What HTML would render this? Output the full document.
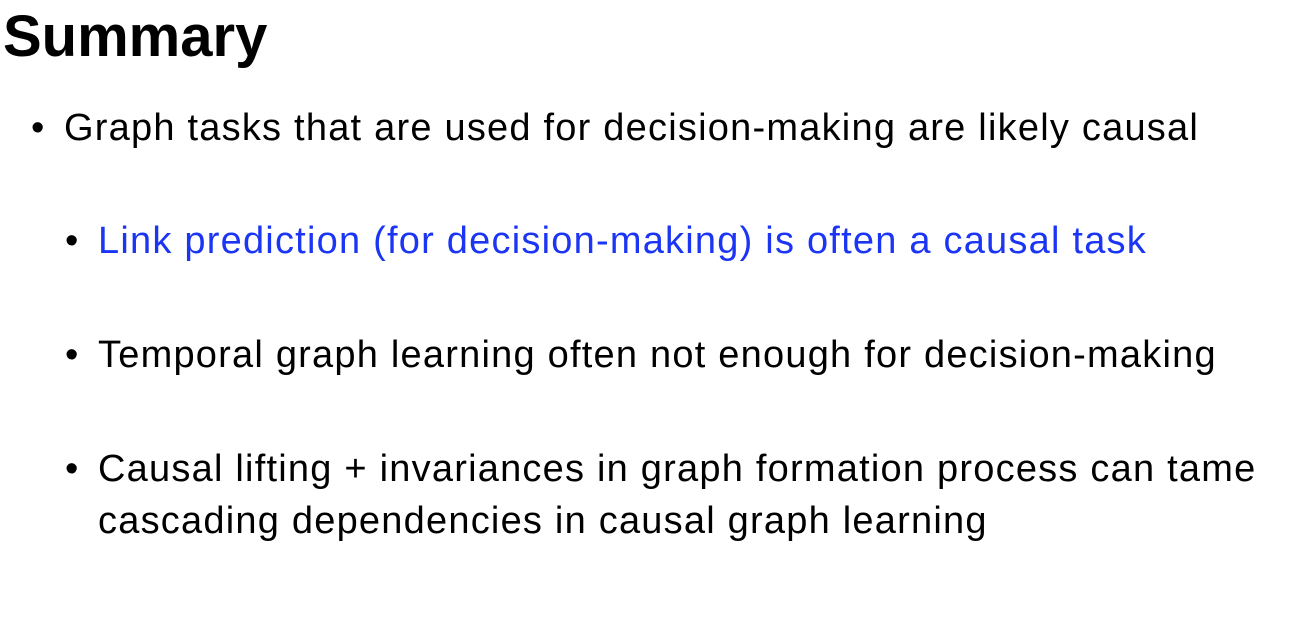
<!DOCTYPE html>
<html><head><meta charset="utf-8"><style>
body{margin:0;width:1302px;height:620px;background:#fff;overflow:hidden;font-family:"Liberation Sans",Arial,sans-serif;position:relative}
.t{position:absolute;white-space:nowrap;line-height:1}
h1{position:absolute;left:3px;top:8px;margin:0;font-size:58px;line-height:1;font-weight:bold}
.b{font-size:38px;letter-spacing:1.22px}
.blue{color:#1b35f5}
</style></head><body>
<h1>Summary</h1>
<div class="t b" style="left:31px;top:109px">•</div>
<div class="t b" style="left:64px;top:109px">Graph tasks that are used for decision-making are likely causal</div>
<div class="t b" style="left:65px;top:222px">•</div>
<div class="t b blue" style="left:98px;top:222px">Link prediction (for decision-making) is often a causal task</div>
<div class="t b" style="left:65px;top:336px">•</div>
<div class="t b" style="left:98px;top:336px">Temporal graph learning often not enough for decision-making</div>
<div class="t b" style="left:65px;top:450px">•</div>
<div class="t b" style="left:98px;top:450px">Causal lifting + invariances in graph formation process can tame</div>
<div class="t b" style="left:98px;top:502px">cascading dependencies in causal graph learning</div>
</body></html>
